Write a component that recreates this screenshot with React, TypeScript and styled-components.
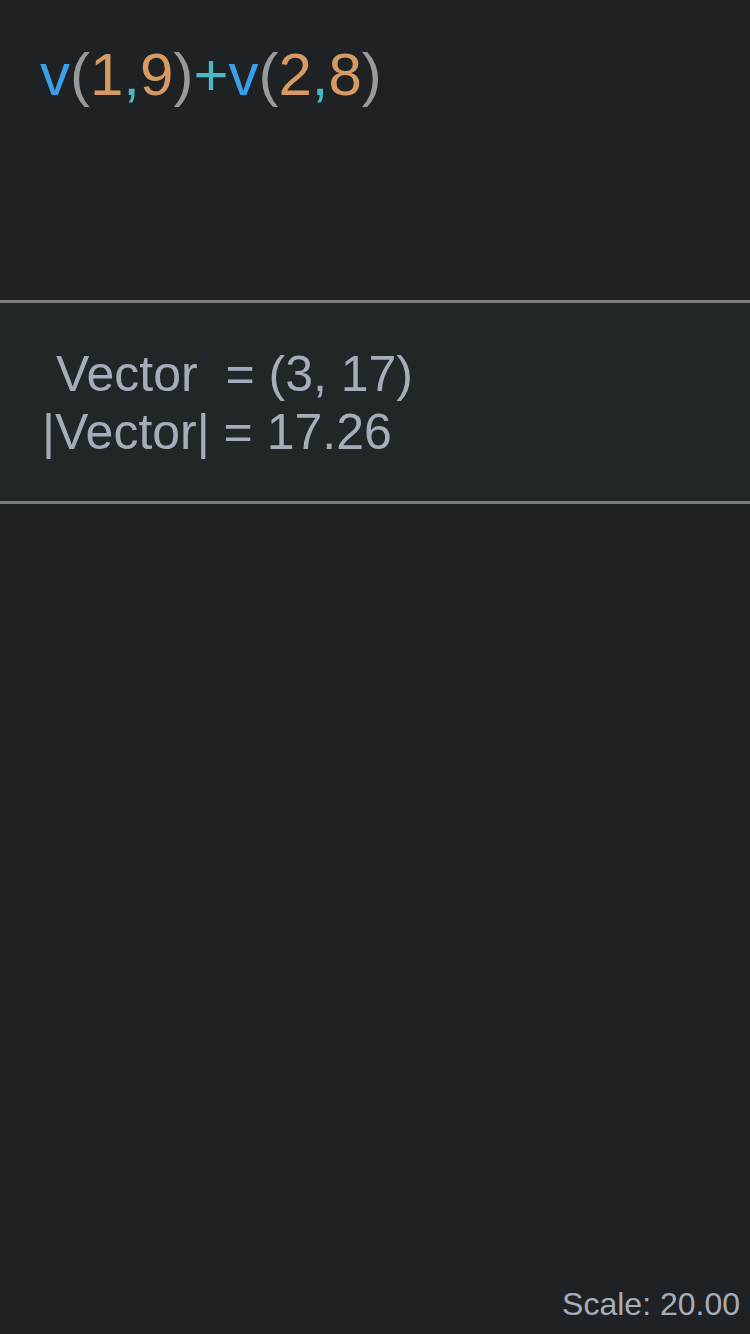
import React from "react";
import styled, { createGlobalStyle } from "styled-components";

const Global = createGlobalStyle`
  html, body { margin: 0; padding: 0; background: #1f2224; }
  body { font-family: "Liberation Sans", Arial, sans-serif; }
  #root { min-height: 100vh; }
`;

const Page = styled.div`
  position: relative;
  display: flex;
  flex-direction: column;
  width: 750px;
  height: 1334px;
  background: #1f2224;
  overflow: hidden;
`;

const Editor = styled.div`
  height: 300px;
  box-sizing: border-box;
  padding: 41px 0 0 40px;
  font-size: 60px;
  line-height: 67px;
  white-space: pre;
`;

const Tok = styled.span<{ $c: string }>`
  color: ${(p) => p.$c};
`;

const Output = styled.div`
  height: 204px;
  box-sizing: border-box;
  border-top: 3px solid #7a7d7c;
  border-bottom: 3px solid #7a7d7c;
  background: #212627;
  padding: 42px 0 0 42px;
  color: #a6adba;
  font-size: 50px;
  line-height: 58px;
  white-space: pre;
`;

const Canvas = styled.div`
  flex: 1;
`;

const ScaleLabel = styled.div`
  position: absolute;
  right: 10px;
  bottom: 12px;
  color: #a6adba;
  font-size: 32px;
  line-height: 36px;
`;

const BLUE = "#3aa0ea";
const GREY = "#9a9a9a";
const ORANGE = "#d79a63";
const TEAL = "#4cb8c6";

export default function App() {
  return (
    <Page>
      <Global />
      <Editor>
        <Tok $c={BLUE}>v</Tok>
        <Tok $c={GREY}>(</Tok>
        <Tok $c={ORANGE}>1</Tok>
        <Tok $c={TEAL}>,</Tok>
        <Tok $c={ORANGE}>9</Tok>
        <Tok $c={GREY}>)</Tok>
        <Tok $c={TEAL}>+</Tok>
        <Tok $c={BLUE}>v</Tok>
        <Tok $c={GREY}>(</Tok>
        <Tok $c={ORANGE}>2</Tok>
        <Tok $c={TEAL}>,</Tok>
        <Tok $c={ORANGE}>8</Tok>
        <Tok $c={GREY}>)</Tok>
      </Editor>
      <Output>
        {" Vector  = (3, 17)\n|Vector| = 17.26"}
      </Output>
      <Canvas />
      <ScaleLabel>Scale: 20.00</ScaleLabel>
    </Page>
  );
}
